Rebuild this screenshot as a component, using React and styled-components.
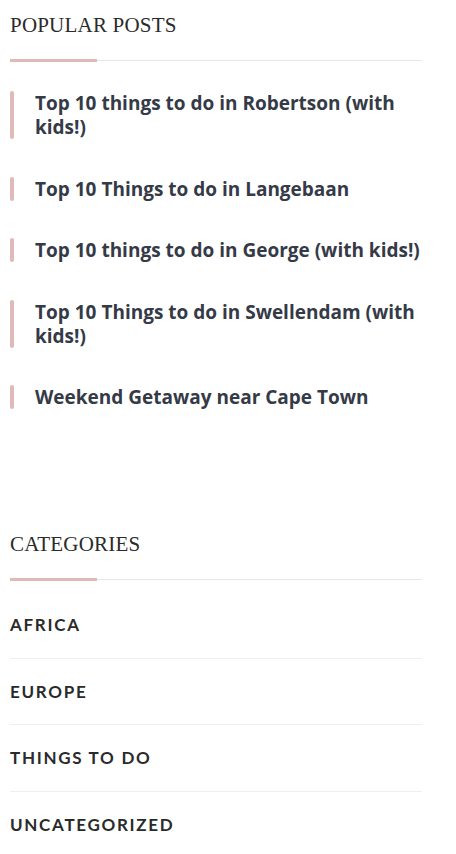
import React from 'react'
import styled, {createGlobalStyle} from 'styled-components'

const posts = [
    'Top 10 things to do in Robertson (with kids!)',
    'Top 10 Things to do in Langebaan',
    'Top 10 things to do in George (with kids!)',
    'Top 10 Things to do in Swellendam (with kids!)',
    'Weekend Getaway near Cape Town',
]

const categories = ['Africa', 'Europe', 'Things to do', 'Uncategorized']

export default function App() {
    return (
        <>
            <GlobalStyle/>
            <Sidebar>
                <Widget>
                    <WidgetTitle>Popular Posts</WidgetTitle>
                    <PostList>
                        {posts.map(p => (
                            <PostItem key={p}>
                                <Marker/>
                                <PostLink href="#">{p}</PostLink>
                            </PostItem>
                        ))}
                    </PostList>
                </Widget>
                <Widget $spaced>
                    <WidgetTitle>Categories</WidgetTitle>
                    <CategoryList>
                        {categories.map(c => (
                            <CategoryItem key={c}>
                                <CategoryLink href="#">{c}</CategoryLink>
                            </CategoryItem>
                        ))}
                    </CategoryList>
                </Widget>
            </Sidebar>
        </>
    )
}

const GlobalStyle = createGlobalStyle`
    body {
        margin: 0;
        background: #fff;
        font-family: "Open Sans", sans-serif;
    }
    * { box-sizing: border-box; }
`

const Sidebar = styled.aside`
    width: 422px;
    padding: 8px 0 0 10px;
`

const Widget = styled.section`
    margin-top: ${props => props.$spaced ? '118px' : '0'};
`

const WidgetTitle = styled.h2`
    position: relative;
    margin: 0;
    padding: 2px 0 20px;
    font-family: "Liberation Serif", serif;
    font-weight: 400;
    font-size: 21px;
    line-height: 30px;
    letter-spacing: 0.2px;
    text-transform: uppercase;
    color: #2b2b2b;
    border-bottom: 1px solid #e6e6e6;

    &::after {
        content: '';
        position: absolute;
        left: 0;
        bottom: -2px;
        width: 87px;
        height: 3px;
        background: #e0b9b9;
    }
`

const PostList = styled.ul`
    list-style: none;
    margin: 30px 0 0;
    padding: 0;
    display: flex;
    flex-direction: column;
    gap: 37.5px;
`

const PostItem = styled.li`
    display: flex;
    gap: 21px;
`

const Marker = styled.span`
    flex: 0 0 4px;
    border-radius: 2px;
    background: #e0b9b9;
`

const PostLink = styled.a`
    font-size: 19px;
    font-weight: 700;
    line-height: 24px;
    color: #353a47;
    text-decoration: none;
`

const CategoryList = styled.ul`
    list-style: none;
    margin: 12px 0 0;
    padding: 0;
`

const CategoryItem = styled.li`
    padding: 23px 0 22.5px;
    border-bottom: 1px solid #efefef;

    &:last-child {
        border-bottom: none;
    }
`

const CategoryLink = styled.a`
    display: block;
    font-family: Lato, sans-serif;
    font-size: 17px;
    font-weight: 700;
    line-height: 20px;
    letter-spacing: 1.7px;
    text-transform: uppercase;
    color: #2a2a2a;
    text-decoration: none;
`
